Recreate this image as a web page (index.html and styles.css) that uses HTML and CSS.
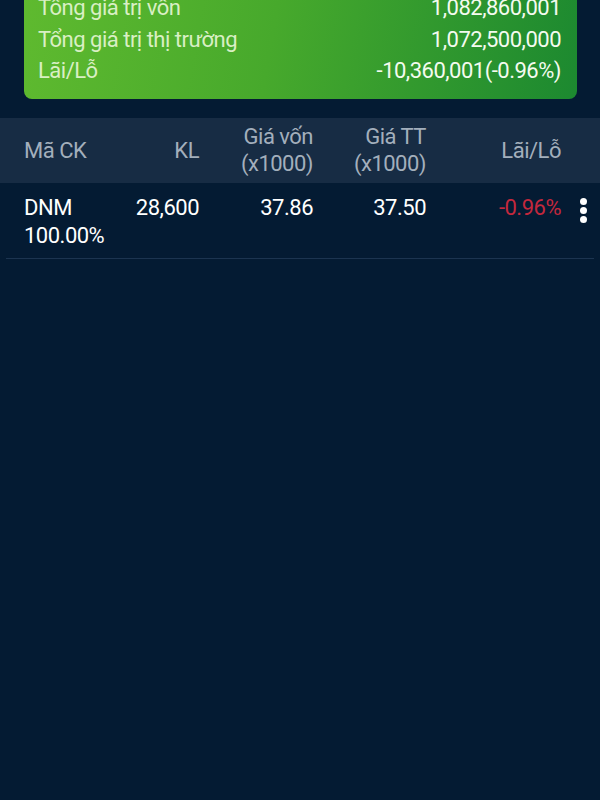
FILE: index.html
```html
<!DOCTYPE html>
<html lang="vi">
<head>
    <meta charset="UTF-8">
    <meta name="viewport" content="width=device-width, initial-scale=1.0">
    <title>Danh mục</title>
    <link rel="stylesheet" href="styles.css">
</head>
<body>
    <section class="summary">
        <div class="summary-row">
            <span class="label">Tổng giá trị vốn</span>
            <span class="value">1,082,860,001</span>
        </div>
        <div class="summary-row">
            <span class="label">Tổng giá trị thị trường</span>
            <span class="value">1,072,500,000</span>
        </div>
        <div class="summary-row">
            <span class="label">Lãi/Lỗ</span>
            <span class="value">-10,360,001(-0.96%)</span>
        </div>
    </section>

    <div class="table-head">
        <div class="col col-code">Mã CK</div>
        <div class="col num">KL</div>
        <div class="col num">Giá vốn<br>(x1000)</div>
        <div class="col num">Giá TT<br>(x1000)</div>
        <div class="col num">Lãi/Lỗ</div>
        <div class="col"></div>
    </div>

    <div class="table-row">
        <div class="col col-code">DNM<br>100.00%</div>
        <div class="col num">28,600</div>
        <div class="col num">37.86</div>
        <div class="col num">37.50</div>
        <div class="col num loss">-0.96%</div>
        <div class="col more">
            <span class="dot"></span>
            <span class="dot"></span>
            <span class="dot"></span>
        </div>
    </div>
</body>
</html>
```

FILE: styles.css
```css
body {
    margin: 0;
    padding: 0;
    background-color: #041b33;
    font-family: Roboto, "Liberation Sans", sans-serif;
    font-size: 22px;
    color: #ffffff;
    height: 800px;
    overflow: hidden;
}

/* thẻ tổng quan */
.summary {
    margin: -22px 23px 0 24px;
    padding: 14px 16px 12px 14px;
    border-radius: 8px;
    background: linear-gradient(100deg, #5fba2f 0%, #47a92c 45%, #1c8930 100%);
}

.summary-row {
    display: flex;
    justify-content: space-between;
    line-height: 31.5px;
    letter-spacing: -0.5px;
}

.summary-row .label {
    color: #d9efc4;
}

.summary-row .value {
    color: #f4fbef;
}

/* bảng */
.table-head,
.table-row {
    display: grid;
    grid-template-columns: 100px 75px 114px 113px 135px 1fr;
    letter-spacing: -0.5px;
}

.table-head {
    margin-top: 19px;
    padding-left: 24px;
    height: 65px;
    align-items: center;
    background-color: #172c44;
    color: #a3afbc;
    line-height: 27px;
}

.table-row {
    margin: 0 6px;
    padding: 11px 0 8px 18px;
    line-height: 28px;
    border-bottom: 1px solid #1c3450;
    align-items: start;
}

.num {
    text-align: right;
}

.loss {
    color: #c3283d;
}

.more {
    display: flex;
    flex-direction: column;
    align-items: center;
    gap: 2px;
    padding: 4px 0 0 11px;
}

.dot {
    width: 7px;
    height: 7px;
    border-radius: 50%;
    background-color: #ffffff;
}
```
